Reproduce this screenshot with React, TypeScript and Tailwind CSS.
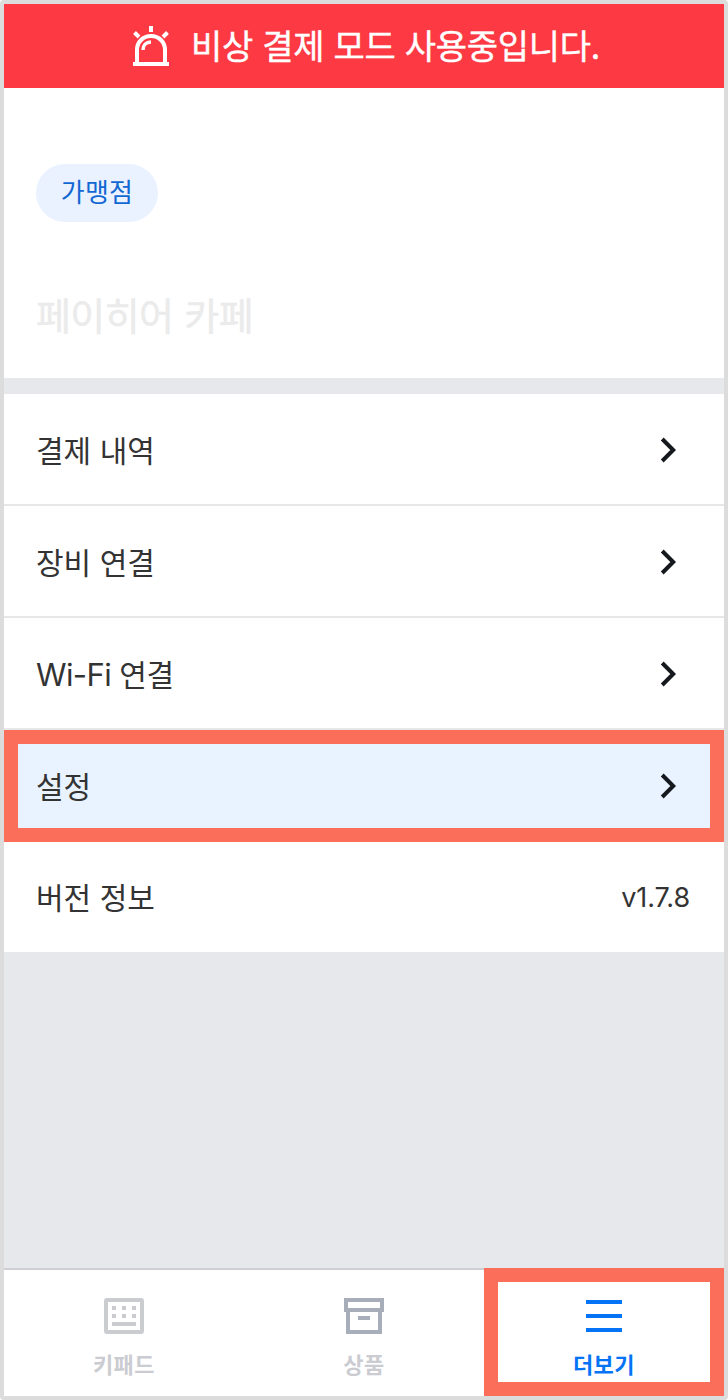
type MenuItem = {
  label: string;
  latin?: string;
  value?: string;
  highlighted?: boolean;
};

const menuItems: MenuItem[] = [
  { label: '결제 내역' },
  { label: '장비 연결' },
  { latin: 'Wi-Fi', label: '연결' },
  { label: '설정', highlighted: true },
  { label: '버전 정보', value: 'v1.7.8' },
];

function SirenIcon() {
  return (
    <svg width="36" height="42" viewBox="0 0 36 42" fill="none" stroke="#fff" strokeWidth="4">
      <path d="M18 1V7M1.5 7.5L6 12M34.5 7.5L30 12" />
      <path d="M4 38V25C4 17 10 11 18 11S32 17 32 25V38" />
      <path d="M0 39H36" />
      <path d="M10 25C10 20 13 17 18 17" strokeWidth="3.5" />
    </svg>
  );
}

function ChevronIcon() {
  return (
    <svg width="18" height="26" viewBox="0 0 18 26" fill="none" stroke="#15181c" strokeWidth="4">
      <path d="M2.2 2L13.2 13L2.2 24" />
    </svg>
  );
}

function KeypadIcon() {
  return (
    <svg width="40" height="36" viewBox="0 0 40 36" fill="#cbcccf">
      <rect x="2" y="2" width="36" height="32" rx="1" fill="none" stroke="#cbcccf" strokeWidth="4" />
      <path d="M8 8h4v4h-4zM18 8h4v4h-4zM28 8h4v4h-4zM8 16h4v4h-4zM18 16h4v4h-4zM28 16h4v4h-4zM8 24h24v4H8z" />
    </svg>
  );
}

function BoxIcon() {
  return (
    <svg width="40" height="36" viewBox="0 0 40 36" fill="none" stroke="#a8adba" strokeWidth="4">
      <path d="M2 2H38V12H2ZM4 12V34H36V12M14 20H26" />
    </svg>
  );
}

function MenuIcon() {
  return (
    <svg width="36" height="32" viewBox="0 0 36 32" stroke="#0573f5" strokeWidth="4">
      <path d="M0 2H36M0 16H36M0 30H36" />
    </svg>
  );
}

function MenuRow({ item }: { item: MenuItem }) {
  return (
    <li
      className={
        item.highlighted
          ? 'flex h-28 items-center justify-between border-14 border-[#fa6e5a] bg-[#e9f3ff] pr-[32px] pl-[18px]'
          : item.value
            ? 'flex h-[110px] items-center justify-between bg-white pr-[34px] pl-8'
            : 'flex h-28 items-center justify-between border-b-2 border-[#e7e7e9] bg-white pt-0.5 pr-[46px] pl-8'
      }
    >
      <span className="-mt-0.5 flex items-baseline text-[30px] leading-[44px] tracking-[-0.2px] [word-spacing:2.5px] text-[#333333]">
        {item.latin && (
          <span className="mr-[8px] font-[Inter] text-[31px] leading-none tracking-[-0.6px]">{item.latin}</span>
        )}
        {item.label}
      </span>
      {item.value ? (
        <span className="font-[Inter] text-[27px] leading-none tracking-[-0.1px] text-[#333333]">{item.value}</span>
      ) : (
        <ChevronIcon />
      )}
    </li>
  );
}

export default function App() {
  return (
    <div className="flex h-[1400px] w-[728px] flex-col overflow-hidden rounded border-4 border-[#dcdcdd] bg-[#e7e8ec] font-['Noto_Sans_CJK_KR',sans-serif]">
      <header className="flex h-21 shrink-0 items-center bg-[#fd3943] pl-[129px]">
        <SirenIcon />
        <p className="-mt-0.5 ml-[22px] text-[34px] leading-[50px] tracking-[-0.3px] [word-spacing:2px] whitespace-nowrap text-white [-webkit-text-stroke:0.4px_#fff]">
          비상 결제 모드 사용중입니다.
        </p>
      </header>

      <section className="h-[290px] shrink-0 bg-white px-8 pt-19">
        <span className="flex h-[58px] w-[122px] items-center justify-center rounded-full bg-[#eaf2ff] pb-[5px] text-[26px] leading-[38px] tracking-[0.3px] text-[#1268d3]">
          가맹점
        </span>
        <h1 className="mt-[64px] text-[38px] leading-[56px] tracking-[-0.6px] [word-spacing:3px] text-[#ebebeb] [-webkit-text-stroke:0.5px_#ebebeb]">
          페이히어 카페
        </h1>
      </section>

      <ul className="mt-4 shrink-0">
        {menuItems.map((item) => (
          <MenuRow key={item.label + (item.latin ?? '')} item={item} />
        ))}
      </ul>

      <nav className="mt-auto flex h-32 shrink-0 bg-white text-[22px] leading-[32px] font-bold tracking-[0.5px]">
        <button className="flex w-60 flex-col items-center border-t-2 border-[#cfcfd5] pt-7 text-[#cbccd1]">
          <KeypadIcon />
          <span className="mt-[13px]">키패드</span>
        </button>
        <button className="flex w-60 flex-col items-center border-t-2 border-[#cfcfd5] pt-7 text-[#cbccd1]">
          <BoxIcon />
          <span className="mt-[13px]">상품</span>
        </button>
        <button className="flex w-60 flex-col items-center border-14 border-[#fa6e5a] pt-[18px] text-[#0573f5]">
          <MenuIcon />
          <span className="mt-[15px]">더보기</span>
        </button>
      </nav>
    </div>
  );
}
